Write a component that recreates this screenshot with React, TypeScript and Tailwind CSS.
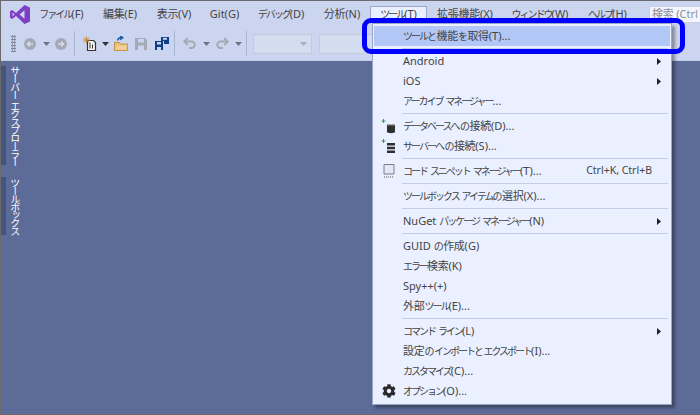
import React from "react";
import { FaCog } from "react-icons/fa";

const menus: [string, string][] = [
  ["ファイル(F)", "w-[63px]"],
  ["編集(E)", "w-[54px]"],
  ["表示(V)", "w-[54px]"],
  ["Git(G)", "w-[47px]"],
  ["デバッグ(D)", "w-[66px]"],
  ["分析(N)", "w-[56px]"],
  ["ツール(T)", "w-[57px]"],
  ["拡張機能(X)", "w-[76px]"],
  ["ウィンドウ(W)", "w-[74px]"],
  ["ヘルプ(H)", "w-[61px]"],
];

function T({ s }: { s: string }) {
  const runs = s.match(/[\u30A0-\u30FF]+|[\u3040-\u309F]+|[\u4E00-\u9FFF]+|[^\u3040-\u30FF\u4E00-\u9FFF]+/g) || [];
  return (
    <>
      {runs.map((r, i) => {
        const c = r.charCodeAt(0);
        const cls =
          c >= 0x30a0 && c <= 0x30ff
            ? "text-[10px] tracking-[-2px]"
            : c >= 0x3040 && c <= 0x309f
            ? "text-[10px] tracking-[-0.5px]"
            : c >= 0x4e00
            ? "text-[11px] tracking-[-0.3px]"
            : "text-[11px]";
        return (
          <span key={i} className={cls}>
            {r}
          </span>
        );
      })}
    </>
  );
}

function Caret({ c = "#6d7688" }: { c?: string }) {
  return (
    <svg width="7" height="4" viewBox="0 0 7 4" className="shrink-0">
      <path d="M0 0h7L3.5 4z" fill={c} />
    </svg>
  );
}
function Circle({ flip }: { flip?: boolean }) {
  return (
    <svg width="12" height="12" viewBox="0 0 12 12" className="shrink-0">
      <circle cx="6" cy="6" r="6" fill="#a3a9b5" />
      <path d={flip ? "M3 6h5M6 3.5 8.5 6 6 8.5" : "M9 6H4M6 3.5 3.5 6 6 8.5"} stroke="#d5dcef" strokeWidth="1.6" fill="none" />
    </svg>
  );
}
function Sep() {
  return <div className="w-px h-[25px] bg-[#a9b6d3] shrink-0" />;
}
function NewProject() {
  return (
    <svg width="14" height="16" viewBox="0 0 14 16" className="shrink-0">
      <path d="M4.5 4.5h6l2 2v8h-8z" fill="#f6f6f6" stroke="#333" strokeWidth="1.2" />
      <path d="M7 6.5v6M9.5 8.5v4" stroke="#333" strokeWidth="1" />
      <path d="M3.5 0.5v7M0 4h7M1 1.5l5 5M6 1.5l-5 5" stroke="#c98a3c" strokeWidth="1" />
    </svg>
  );
}
function Folder() {
  return (
    <svg width="14" height="15" viewBox="0 0 14 15" className="shrink-0">
      <path d="M0.5 6.5h5l1 1.5h7v6.5h-13z" fill="#e8bf79" stroke="#c59440" />
      <path d="M1 14l2-4.5h10.5L12 14z" fill="#f0cf96" />
      <path d="M3.5 4.5c0-2 1.5-3 4-3M6.5 0l2.500 1.700-2.500 1.700z" stroke="#1c5fa8" fill="#1c5fa8" strokeWidth="1.200" />
    </svg>
  );
}
function Save({ c = "#a3a9b5" }: { c?: string }) {
  return (
    <svg width="12" height="12" viewBox="0 0 12 12" className="shrink-0">
      <path d="M0 0h10l2 2v10H0z" fill={c} />
      <path d="M3 1h6v3.500H3z" fill="#ccd5f0" />
      <path d="M3 7.500h6V12H3z" fill="#ccd5f0" />
    </svg>
  );
}
function SaveAll() {
  return (
    <svg width="14" height="13" viewBox="0 0 14 13" className="shrink-0">
      <path d="M6 0h8v7H9V4H6z" fill="#0e3f84" />
      <path d="M8 0.800h4v2H8z" fill="#ccd5f0" />
      <path d="M0 4h8v9H0z" fill="#0e3f84" />
      <path d="M2 5h4v2.500H2zM2 10h4v3H2z" fill="#ccd5f0" />
    </svg>
  );
}
function Undo({ flip }: { flip?: boolean }) {
  return (
    <svg width="13" height="13" viewBox="0 0 13 13" className={flip ? "shrink-0 -scale-x-100" : "shrink-0"}>
      <path d="M2 4.500h6.500a3 3 0 0 1 0 6.500H6" fill="none" stroke="#a3a9b5" strokeWidth="2" />
      <path d="M4.800 1 1 4.500 4.800 8" fill="none" stroke="#a3a9b5" strokeWidth="1.800" />
    </svg>
  );
}
function Db() {
  return (
    <svg width="16" height="15" viewBox="0 0 16 15">
      <path d="M2.500 0v4M0.500 2h4" stroke="#2e9e45" strokeWidth="1" />
      <path d="M6 6c0-1.500 8-1.500 8 0v7c0 1.500-8 1.500-8 0z" fill="#2f2f2f" />
      <path d="M7 6.200c1.500-.7 4.500-.7 6 0" stroke="#ddd" strokeWidth="1" fill="none" />
    </svg>
  );
}
function Server() {
  return (
    <svg width="16" height="15" viewBox="0 0 16 15">
      <path d="M2.500 0v4M0.500 2h4" stroke="#2e9e45" strokeWidth="1" />
      <path d="M6 4h8v2.500H6zM6 7.700h8v2.500H6zM6 11.400h8v2.600H6z" fill="#2f2f2f" />
    </svg>
  );
}
function Snippet() {
  return (
    <svg width="12" height="14" viewBox="0 0 12 14">
      <path d="M1 .5h10v9.500H1z" fill="#e4e8f4" stroke="#7b7f8a" />
      <path d="M1 13h10" stroke="#555" strokeDasharray="1 1" />
    </svg>
  );
}

type Row =
  | { sep: true }
  | { label: string; sub?: boolean; key2?: string; icon?: React.ReactNode; hi?: boolean; sep?: false };

const rows: Row[] = [
  { label: "ツールと機能を取得(T)...", hi: true },
  { sep: true },
  { label: "Android", sub: true },
  { label: "iOS", sub: true },
  { label: "アーカイブ マネージャー..." },
  { sep: true },
  { label: "データベースへの接続(D)...", icon: <Db /> },
  { label: "サーバーへの接続(S)...", icon: <Server /> },
  { sep: true },
  { label: "コード スニペット マネージャー(T)...", key2: "Ctrl+K, Ctrl+B", icon: <Snippet /> },
  { sep: true },
  { label: "ツールボックス アイテムの選択(X)..." },
  { sep: true },
  { label: "NuGet パッケージ マネージャー(N)", sub: true },
  { sep: true },
  { label: "GUID の作成(G)" },
  { label: "エラー検索(K)" },
  { label: "Spy++(+)" },
  { label: "外部ツール(E)..." },
  { sep: true },
  { label: "コマンド ライン(L)", sub: true },
  { label: "設定のインポートとエクスポート(I)..." },
  { label: "カスタマイズ(C)..." },
  { label: "オプション(O)...", icon: <FaCog size={14} color="#2b2b2b" /> },
];

export default function App() {
  return (
    <div className="relative w-[700px] h-[415px] overflow-hidden bg-[#5d6b99] border-l border-t border-b border-[#6a6a6a] flex flex-col text-[11px] text-[#444] font-['Noto_Sans','Noto_Sans_CJK_JP',sans-serif]">
      <div className="h-[26px] bg-[#ccd5f0] flex items-center shrink-0">
        <div className="w-[29px] flex justify-start pl-[9px] shrink-0">
          <svg width="20" height="19" viewBox="0 0 20 19" className="shrink-0">
            <path d="M14.500 0 20 2.500v14L14.500 19 6 11l-3.800 3L0 12.800V6.200L2.200 5 6 8zM14.500 5.200 9.500 9.500l5 4.300zM2.500 7.500v4l2-2z" fill="#7c3fc4" fillRule="evenodd" />
          </svg>
        </div>
        {menus.map(([m, w], i) => (
          <div key={m} className={`${w} h-[17px] flex items-center justify-center shrink-0 whitespace-nowrap ${i === 6 ? "bg-[#eaf0ff] border border-b-0 border-[#9ba7c4]" : ""}`}>
            <span><T s={m} /></span>
          </div>
        ))}
        <div className="ml-[11px] flex-1 h-[17px] bg-[#f3f5fc] border border-[#c8d0e6] border-r-0 flex items-center pl-[2px] text-[#8b8f98] whitespace-nowrap overflow-hidden">
          <span><T s="検索 (Ctrl" /></span>
        </div>
      </div>
      <div className="h-[34px] bg-[#ccd5f0] border-b border-[#c2cce6] flex items-center shrink-0">
        <div className="ml-[10px] w-[5px] h-[17px] shrink-0 bg-[radial-gradient(#7f8796_1px,transparent_1px)] bg-[length:2.500px_3px]" />
        <div className="ml-[8px]"><Circle /></div>
        <div className="ml-[7px]"><Caret /></div>
        <div className="ml-[5px]"><Circle flip /></div>
        <div className="ml-[7px]"><Sep /></div>
        <div className="ml-[8px]"><NewProject /></div>
        <div className="ml-[5px]"><Caret c="#333" /></div>
        <div className="ml-[5px]"><Folder /></div>
        <div className="ml-[7px]"><Save /></div>
        <div className="ml-[8px]"><SaveAll /></div>
        <div className="ml-[5px]"><Sep /></div>
        <div className="ml-[8px]"><Undo /></div>
        <div className="ml-[7px]"><Caret /></div>
        <div className="ml-[6px]"><Undo flip /></div>
        <div className="ml-[6px]"><Caret /></div>
        <div className="ml-[4px]"><Sep /></div>
        <div className="ml-[6px] w-[59px] h-[20px] bg-[#d4dcef] border border-[#c2cade] flex items-center justify-end pr-[4px] shrink-0"><Caret c="#a9aeb9" /></div>
        <div className="ml-[7px] w-[70px] h-[20px] bg-[#d4dcef] border border-[#c2cade] shrink-0" />
      </div>
      <div className="flex-1 flex flex-col gap-[12px] pt-[5px]">
        <div className="h-[99px] w-[22px] border-l-[5px] border-[#44547c] flex items-center justify-center">
          <span className="[writing-mode:vertical-rl] text-white whitespace-nowrap"><T s="サーバー エクスプローラー" /></span>
        </div>
        <div className="h-[58px] w-[22px] border-l-[5px] border-[#44547c] flex items-center justify-center">
          <span className="[writing-mode:vertical-rl] text-white whitespace-nowrap"><T s="ツールボックス" /></span>
        </div>
      </div>

      <div className="absolute left-[371px] top-[22px] w-[300px] h-[382px] bg-[#eaf0ff] border border-[#9ba7c4] pt-[2px] px-[1px] shadow-[3px_3px_3px_rgba(0,0,0,0.35)]">
        {rows.map((r, i) =>
          r.sep ? (
            <div key={i} className="h-[5px] flex items-center pl-[28px] pr-[2px]">
              <div className="h-px w-full bg-[#c5cce8]" />
            </div>
          ) : (
            <div key={i} className={`h-[20px] flex items-center pr-[8px] ${r.hi ? "bg-[#b3c7f7]" : ""}`}>
              <div className="w-[29px] h-full flex items-center justify-center shrink-0">{r.icon}</div>
              <span className="whitespace-nowrap"><T s={r.label} /></span>
              {r.key2 && <span className="ml-auto pr-[10px] whitespace-nowrap text-[10.5px]">{r.key2}</span>}
              {r.sub && (
                <svg width="4" height="7" viewBox="0 0 4 7" className="ml-auto mr-[1px]">
                  <path d="M0 0l4 3.500L0 7z" fill="#222" />
                </svg>
              )}
            </div>
          )
        )}
      </div>

      <div className="absolute left-[361px] top-[17px] w-[323px] h-[36px] border-[5px] border-[#0000ff] rounded-[9px]" />
    </div>
  );
}
